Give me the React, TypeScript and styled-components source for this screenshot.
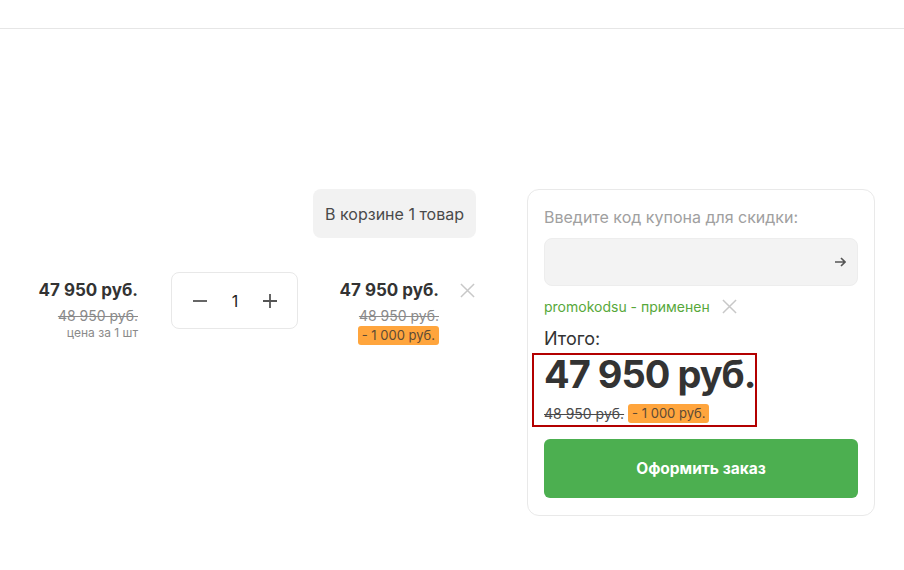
import React from "react";
import styled, { createGlobalStyle } from "styled-components";

const Global = createGlobalStyle`
  html, body { margin: 0; padding: 0; background: #fff; }
  body { font-family: Inter, "Noto Sans", Arial, sans-serif; color: #333; }
  * { box-sizing: border-box; }
`;

const Header = styled.header`
  height: 29px;
  border-bottom: 1px solid #e6e6e6;
`;

const Main = styled.main`
  display: flex;
  align-items: flex-start;
  gap: 51px;
  padding: 160px 29px 0 38px;
`;

const CartColumn = styled.section`
  display: flex;
  flex-direction: column;
  align-items: flex-end;
  width: 438px;
`;

const CountBadge = styled.div`
  height: 49px;
  display: flex;
  align-items: center;
  padding: 0 12px;
  background: #f2f2f2;
  border-radius: 8px;
  font-size: 16px;
  color: #4a4a4a;
`;

const ItemRow = styled.div`
  display: flex;
  align-items: flex-start;
  margin-top: 34px;
  width: 100%;
`;

const PriceCol = styled.div<{ $w: number; $ml: number }>`
  width: ${(p) => p.$w}px;
  margin-left: ${(p) => p.$ml}px;
  padding-top: 6px;
  display: flex;
  flex-direction: column;
  align-items: flex-end;
  white-space: nowrap;
`;

const Price = styled.div`
  font-size: 17px;
  line-height: 24px;
  font-weight: 700;
  color: #333;
  margin-bottom: 5px;
`;

const OldPrice = styled.div<{ $dark?: boolean }>`
  font-size: 14px;
  line-height: 18px;
  color: ${(p) => (p.$dark ? "#4a4a4a" : "#8a8a8a")};
  text-decoration: line-through;
`;

const UnitNote = styled.div`
  font-size: 12px;
  line-height: 16px;
  color: #8a8a8a;
`;

const Discount = styled.span<{ $mt?: number }>`
  display: inline-block;
  margin-top: ${(p) => p.$mt ?? 0}px;
  background: #ffa53d;
  color: #5d4a35;
  font-size: 13px;
  line-height: 19px;
  padding: 0 4px;
  border-radius: 3px;
`;

const Qty = styled.div`
  margin-left: 33px;
  width: 127px;
  height: 57px;
  border: 1px solid #e8e8e8;
  border-radius: 8px;
  display: flex;
  align-items: center;
  justify-content: space-between;
  padding: 0 20px 0 21px;
  font-size: 16px;
  color: #222;
`;

const QtyBtn = styled.span`
  display: flex;
  color: #555;
`;

const RemoveBtn = styled.span<{ $ml: number; $mt: number }>`
  display: flex;
  margin-left: ${(p) => p.$ml}px;
  margin-top: ${(p) => p.$mt}px;
  color: #c8c8c8;
`;

const Panel = styled.aside`
  width: 348px;
  border: 1px solid #e9e9e9;
  border-radius: 12px;
  padding: 16px 16px 17px;
  display: flex;
  flex-direction: column;
`;

const Label = styled.div`
  font-size: 16px;
  line-height: 22px;
  color: #a0a0a0;
`;

const CouponInput = styled.div`
  margin-top: 10px;
  height: 48px;
  background: #f3f3f3;
  border: 1px solid #ededed;
  border-radius: 8px;
  display: flex;
  align-items: center;
  justify-content: flex-end;
  padding-right: 11px;
  color: #555;
`;

const PromoRow = styled.div`
  margin-top: 10px;
  display: flex;
  align-items: center;
  height: 20px;
`;

const PromoText = styled.span`
  font-size: 14px;
  color: #57a83a;
`;

const TotalLabel = styled.div`
  margin-top: 12px;
  font-size: 18px;
  line-height: 22px;
  color: #333;
`;

const TotalBox = styled.div`
  margin: 3px 0 0 -12px;
  width: 225px;
  height: 74px;
  border: 2px solid #b30000;
  padding: 0 0 0 10px;
`;

const BigPrice = styled.div`
  font-size: 38px;
  line-height: 38px;
  font-weight: 700;
  letter-spacing: -1px;
  color: #333;
  white-space: nowrap;
`;

const OldRow = styled.div`
  margin-top: 11px;
  display: flex;
  align-items: center;
  gap: 4px;
`;

const OrderButton = styled.button`
  margin-top: 12px;
  height: 59px;
  border: none;
  border-radius: 6px;
  background: #4caf50;
  color: #fff;
  font-family: inherit;
  font-size: 15.5px;
  font-weight: 700;
`;

const Cross = ({ size }: { size: number }) => (
  <svg width={size} height={size} viewBox="0 0 16 16" fill="none" stroke="currentColor" strokeWidth="1.6">
    <path d="M1 1L15 15M15 1L1 15" />
  </svg>
);

export default function App() {
  return (
    <>
      <Global />
      <Header />
      <Main>
        <CartColumn>
          <CountBadge>В корзине 1 товар</CountBadge>
          <ItemRow>
            <PriceCol $w={100} $ml={0}>
              <Price>47 950 руб.</Price>
              <OldPrice>48 950 руб.</OldPrice>
              <UnitNote>цена за 1 шт</UnitNote>
            </PriceCol>
            <Qty>
              <QtyBtn>
                <svg width="14" height="14" viewBox="0 0 14 14" stroke="currentColor" strokeWidth="1.8">
                  <path d="M0 7H14" />
                </svg>
              </QtyBtn>
              <span>1</span>
              <QtyBtn>
                <svg width="14" height="14" viewBox="0 0 14 14" stroke="currentColor" strokeWidth="1.8">
                  <path d="M0 7H14M7 0V14" />
                </svg>
              </QtyBtn>
            </Qty>
            <PriceCol $w={101} $ml={40}>
              <Price>47 950 руб.</Price>
              <OldPrice>48 950 руб.</OldPrice>
              <Discount $mt={1}>- 1 000 руб.</Discount>
            </PriceCol>
            <RemoveBtn $ml={21} $mt={11}>
              <Cross size={15} />
            </RemoveBtn>
          </ItemRow>
        </CartColumn>
        <Panel>
          <Label>Введите код купона для скидки:</Label>
          <CouponInput>
            <svg width="11" height="10" viewBox="0 0 11 10" fill="none" stroke="currentColor" strokeWidth="1.6">
              <path d="M0 5H10M6 1L10 5L6 9" />
            </svg>
          </CouponInput>
          <PromoRow>
            <PromoText>promokodsu - применен</PromoText>
            <RemoveBtn $ml={12} $mt={0}>
              <Cross size={15} />
            </RemoveBtn>
          </PromoRow>
          <TotalLabel>Итого:</TotalLabel>
          <TotalBox>
            <BigPrice>47 950 руб.</BigPrice>
            <OldRow>
              <OldPrice $dark>48 950 руб.</OldPrice>
              <Discount>- 1 000 руб.</Discount>
            </OldRow>
          </TotalBox>
          <OrderButton>Оформить заказ</OrderButton>
        </Panel>
      </Main>
    </>
  );
}
